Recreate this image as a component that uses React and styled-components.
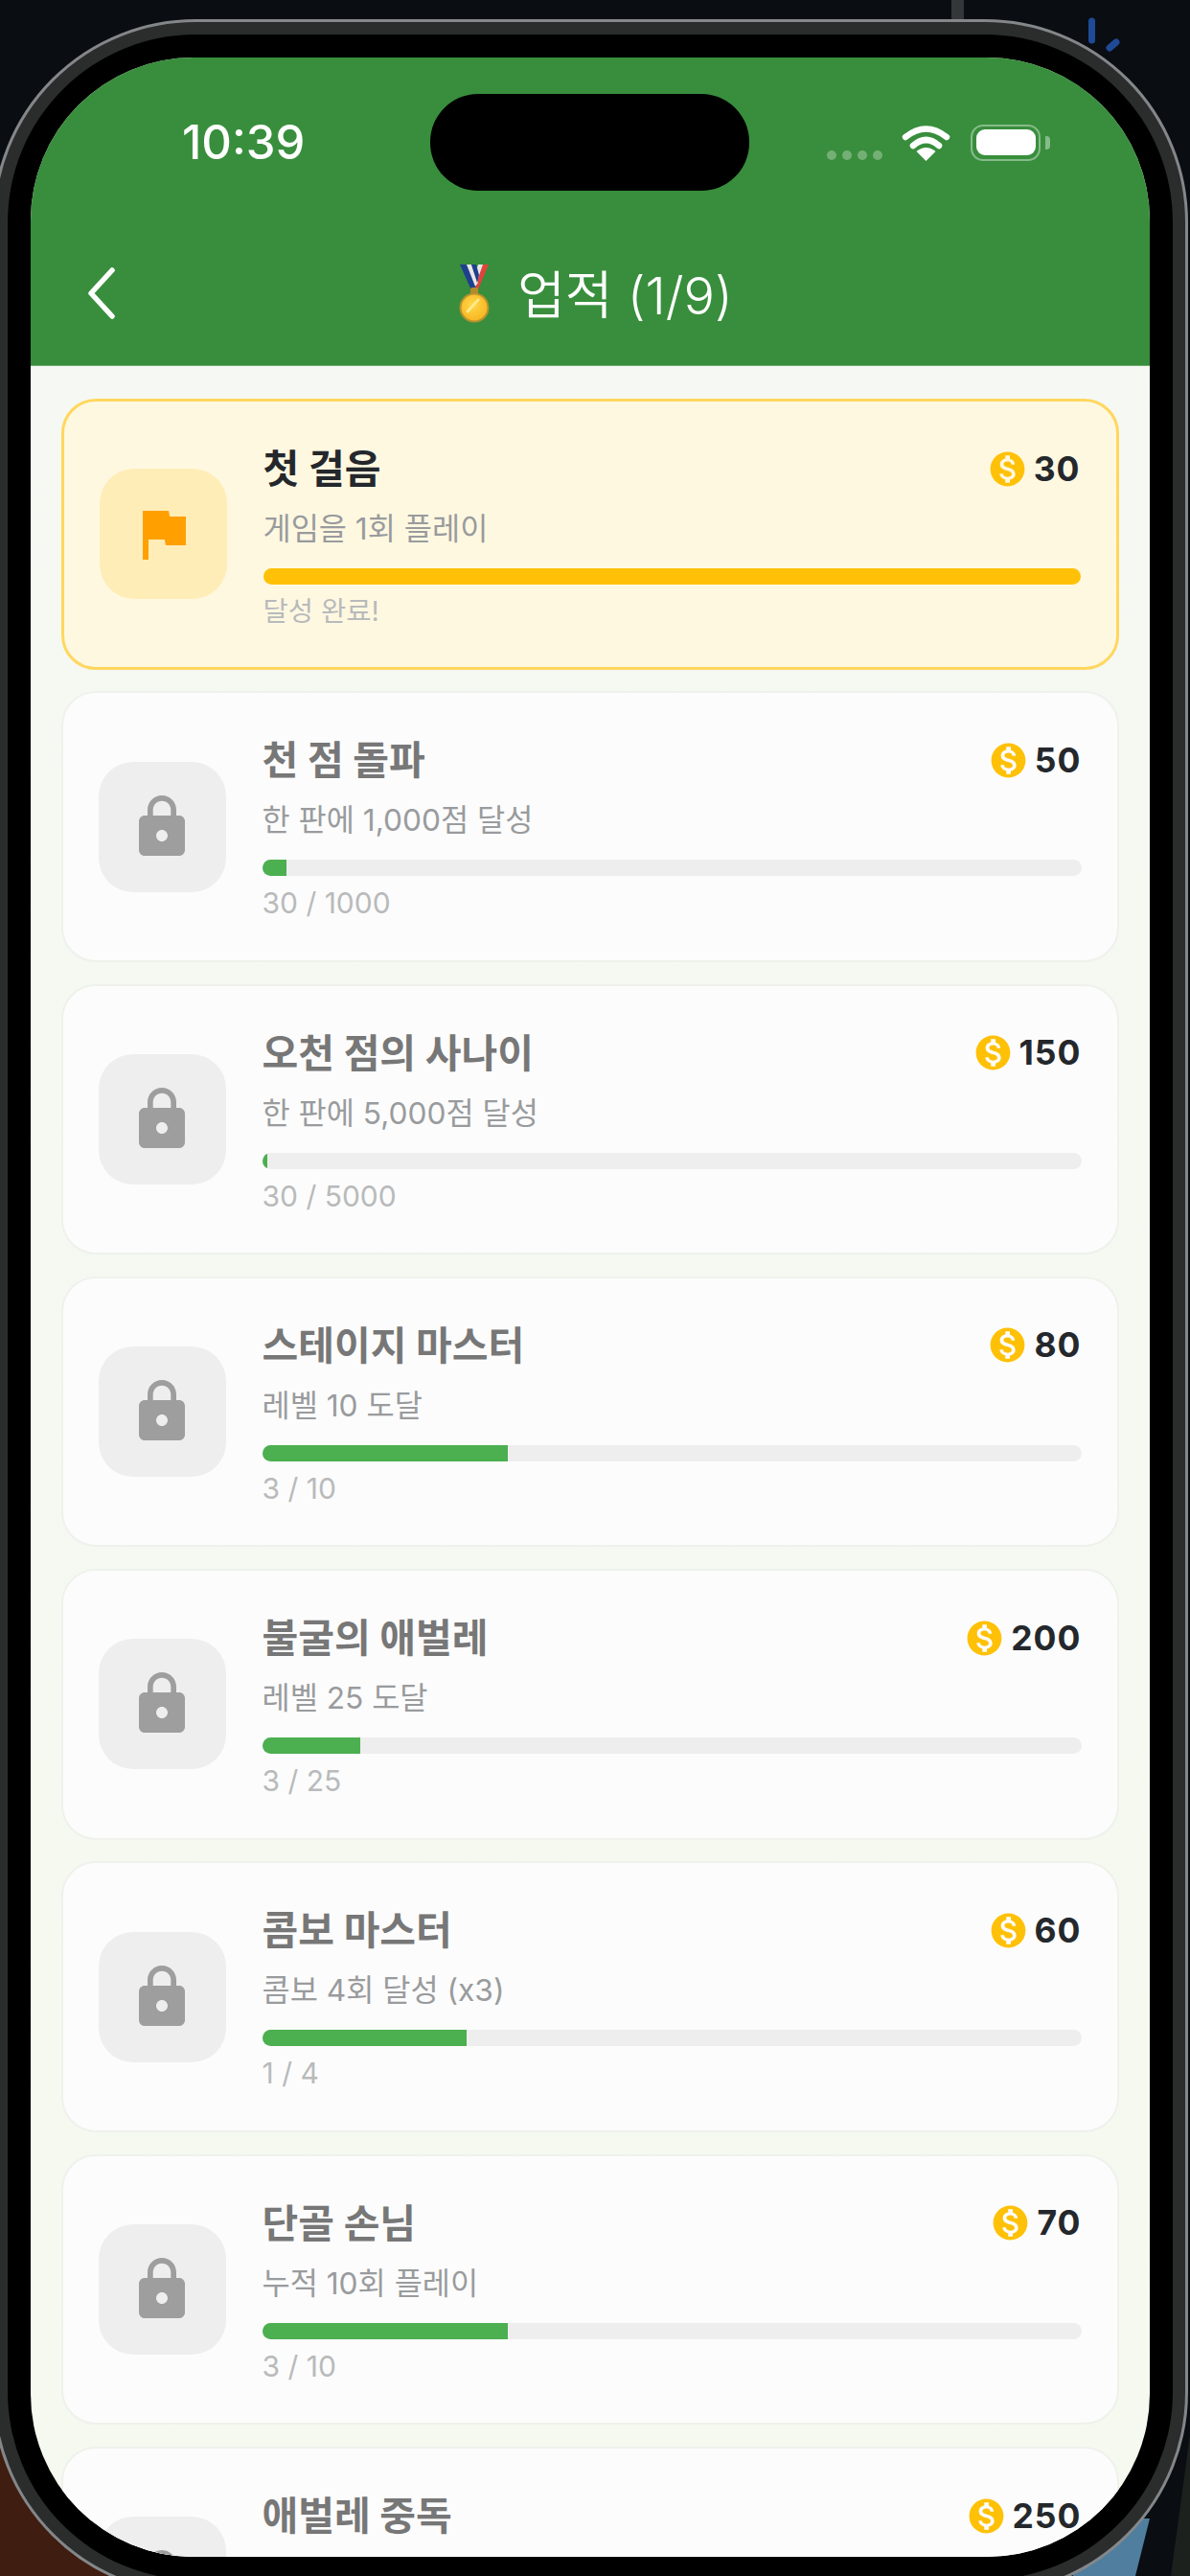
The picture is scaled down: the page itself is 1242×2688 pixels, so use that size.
import React from 'react';
import styled, { createGlobalStyle } from 'styled-components';
import { MdFlag, MdLock, MdMonetizationOn } from 'react-icons/md';

const GlobalStyle = createGlobalStyle`
  html, body {
    margin: 0;
    width: 1242px;
    height: 2688px;
    overflow: hidden;
    background: #0a0d12;
  }
  * { box-sizing: border-box; }
  body {
    font-family: "Inter", "Noto Sans CJK KR", sans-serif;
  }
`;

const achievements = [
  { title: '첫 걸음', desc: '게임을 1회 플레이', reward: 30, done: true, label: '달성 완료!' },
  { title: '천 점 돌파', desc: '한 판에 1,000점 달성', reward: 50, current: 30, goal: 1000 },
  { title: '오천 점의 사나이', desc: '한 판에 5,000점 달성', reward: 150, current: 30, goal: 5000 },
  { title: '스테이지 마스터', desc: '레벨 10 도달', reward: 80, current: 3, goal: 10 },
  { title: '불굴의 애벌레', desc: '레벨 25 도달', reward: 200, current: 3, goal: 25 },
  { title: '콤보 마스터', desc: '콤보 4회 달성 (x3)', reward: 60, current: 1, goal: 4 },
  { title: '단골 손님', desc: '누적 10회 플레이', reward: 70, current: 3, goal: 10 },
  { title: '애벌레 중독', reward: 250 },
];

// the desk behind the device: a stripe at the top, wallpaper showing at the bottom left
const Backdrop = styled.div`
  position: relative;
  width: 1242px;
  height: 2688px;
  overflow: hidden;
  padding-top: 20px;
  background:
    linear-gradient(#34373a, #34373a) 993px 0 / 13px 20px no-repeat,
    linear-gradient(#3f1d10, #3f1d10) 0 2540px / 130px 148px no-repeat,
    #0a0d12;
`;

const Scenery = styled.svg`
  position: absolute;
  left: 0;
  top: 0;
  width: 1242px;
  height: 2688px;
`;

const Frame = styled.div`
  position: relative;
  width: 1248px;
  height: 2688px;
  margin-left: -8px;
  padding: 13px;
  border: 3px solid #84878a;
  border-radius: 212px;
  background: #2b2d2d;
`;

const Bezel = styled.div`
  height: 100%;
  padding: 24px;
  border-radius: 196px;
  background: #000;
`;

const Screen = styled.div`
  height: 100%;
  overflow: hidden;
  border-radius: 170px;
  background: linear-gradient(#f6f8f3, #f5f9ef);
`;

const Header = styled.header`
  height: 322px;
  padding-top: 38px;
  background: #388e3c;
  border-bottom: 1px solid #6fae72;
`;

const StatusRow = styled.div`
  display: grid;
  grid-template-columns: 417px 333px 1fr;
  align-items: center;
  height: 101px;
`;

const Time = styled.div`
  padding-left: 158px;
  color: #fff;
  font-size: 49px;
  font-weight: 500;
`;

const Island = styled.div`
  height: 101px;
  border-radius: 50px;
  background: #000;
`;

const StatusIcons = styled.div`
  display: flex;
  align-items: center;
  padding-left: 81px;
`;

const SignalDots = styled.div`
  display: flex;
  gap: 6px;
  margin: 27px 20px 0 0;
`;

const SignalDot = styled.span`
  width: 10px;
  height: 10px;
  border-radius: 50%;
  background: rgba(255, 255, 255, 0.3);
`;

const Battery = styled.div`
  position: relative;
  width: 73px;
  height: 38px;
  margin-left: 21px;
  padding: 3.5px;
  border: 2px solid rgba(255, 255, 255, 0.4);
  border-radius: 13px;
  &::after {
    content: '';
    position: absolute;
    right: -12px;
    top: 10px;
    width: 5px;
    height: 14px;
    border-radius: 0 4px 4px 0;
    background: rgba(255, 255, 255, 0.4);
  }
`;

const BatteryLevel = styled.div`
  height: 100%;
  border-radius: 9px;
  background: #fff;
`;

const NavRow = styled.div`
  display: grid;
  grid-template-columns: 1fr auto 1fr;
  align-items: center;
  height: 107px;
  margin-top: 53px;
  padding-left: 12px;
`;

const BackIcon = styled.svg`
  width: 30px;
  height: 54px;
  margin-left: 47px;
`;

const Title = styled.div`
  display: flex;
  align-items: center;
  gap: 29px;
  color: #fff;
  font-size: 54px;
  font-weight: 350;
  line-height: 1;
`;

const TitleText = styled.span`
  padding-top: 6px;
`;

const Medal = styled.svg`
  width: 32px;
  height: 62px;
`;

const List = styled.div`
  display: flex;
  flex-direction: column;
  gap: 22.8px;
  padding: 34px 32px 0;
`;

const Card = styled.div`
  display: flex;
  align-items: center;
  gap: 38px;
  height: 282.5px;
  padding: 0 37.5px 0 36.5px;
  border: ${(p) => (p.$done ? '3px solid #ffd75e' : '2.5px solid #eff1ec')};
  border-radius: 36px;
  background: ${(p) => (p.$done ? '#fff8e1' : '#fcfcfc')};
`;

const IconBox = styled.div`
  flex: none;
  display: flex;
  align-items: center;
  justify-content: center;
  width: 133px;
  height: 136px;
  border-radius: 36px;
  background: ${(p) => (p.$done ? '#ffedb8' : '#eeeeee')};
  color: ${(p) => (p.$done ? '#ffa000' : '#9e9e9e')};
  font-size: 72px;
`;

const Body = styled.div`
  flex: 1;
  align-self: flex-start;
  min-width: 0;
  padding-top: 41px;
`;

const TopRow = styled.div`
  display: flex;
  align-items: center;
  justify-content: space-between;
  height: 52px;
`;

const Name = styled.div`
  color: ${(p) => (p.$done ? '#24282c' : '#777777')};
  font-size: 41px;
  font-weight: 700;
`;

const Reward = styled.div`
  display: flex;
  align-items: center;
  gap: 6px;
  padding-top: 6px;
  color: #24282c;
  font-size: 35.5px;
  font-weight: 700;
  letter-spacing: 1px;
  svg {
    color: #ffc107;
    font-size: 43px;
  }
`;

const Desc = styled.div`
  margin-top: 20px;
  color: #999b9d;
  font-size: 31.7px;
  line-height: 40px;
`;

const Track = styled.div`
  height: 17px;
  margin-top: 21px;
  overflow: hidden;
  border-radius: 9px;
  background: #eeeeee;
`;

const Fill = styled.div`
  height: 100%;
  background: ${(p) => (p.$done ? '#ffc107' : '#4caf50')};
`;

const Progress = styled.div`
  margin-top: 10px;
  color: #b8babb;
  font-size: ${(p) => (p.$done ? '28.5px' : '30px')};
  line-height: 36px;
`;

function WifiIcon() {
  return (
    <svg width="51" height="40" viewBox="0 0 51 40">
      <g fill="none" stroke="#fff" strokeWidth="6.5" strokeLinecap="round">
        <path d="M4 14 Q25.5 -3 47 14" />
        <path d="M12 23 Q25.5 11 39 23" />
      </g>
      <path d="M25.5 39 L15.5 29 Q25.5 21 35.5 29 Z" fill="#fff" />
    </svg>
  );
}

function MedalIcon() {
  return (
    <Medal viewBox="0 0 32 62">
      <defs>
        <radialGradient id="gold" cx="45%" cy="40%" r="60%">
          <stop offset="0%" stopColor="#ffd84a" />
          <stop offset="100%" stopColor="#f7b51f" />
        </radialGradient>
      </defs>
      <polygon points="24,1 31,1 20,27 14,22" fill="#e0443a" />
      <polygon points="20,1 25,1 17,24 14,20" fill="#e9e7e2" />
      <polygon points="1,1 8,1 18,24 13,28" fill="#1f3f8f" />
      <polygon points="8,1 13,1 20,20 17,24" fill="#e9e7e2" />
      <polygon points="13,1 18,1 21,12 19,20" fill="#1f3f8f" />
      <rect x="12" y="25" width="8" height="7" rx="2" fill="#b58a2a" />
      <circle cx="16" cy="46" r="14.5" fill="url(#gold)" stroke="#b8912e" strokeWidth="2" />
      <path d="M9 50 L20 38" stroke="#ffe98a" strokeWidth="3" strokeLinecap="round" />
    </Medal>
  );
}

function AchievementCard({ item }) {
  const hasBar = item.done || item.goal;
  const percent = item.done ? 100 : (item.current / item.goal) * 100;
  return (
    <Card $done={item.done}>
      <IconBox $done={item.done}>{item.done ? <MdFlag /> : <MdLock />}</IconBox>
      <Body>
        <TopRow>
          <Name $done={item.done}>{item.title}</Name>
          <Reward>
            <MdMonetizationOn />
            {item.reward}
          </Reward>
        </TopRow>
        {item.desc && <Desc>{item.desc}</Desc>}
        {hasBar && (
          <Track>
            <Fill $done={item.done} style={{ width: `${percent}%` }} />
          </Track>
        )}
        {hasBar && (
          <Progress $done={item.done}>
            {item.done ? item.label : `${item.current} / ${item.goal}`}
          </Progress>
        )}
      </Body>
    </Card>
  );
}

export default function App() {
  return (
    <>
      <GlobalStyle />
      <Backdrop>
        <Scenery viewBox="0 0 1242 2688">
          <path d="M1139.5 22 V42" stroke="#1f4a96" strokeWidth="7" strokeLinecap="round" />
          <path d="M1158 50 L1165 44" stroke="#1f4a96" strokeWidth="7" strokeLinecap="round" />
          <polygon points="1200,2628 1185,2688 1120,2688 1120,2628" fill="#4f7e9e" />
          <polygon points="1242,2540 1242,2688 1222,2688" fill="#1c211e" />
        </Scenery>
        <Frame>
          <Bezel>
            <Screen>
              <Header>
                <StatusRow>
                  <Time>10:39</Time>
                  <Island />
                  <StatusIcons>
                    <SignalDots>
                      <SignalDot />
                      <SignalDot />
                      <SignalDot />
                      <SignalDot />
                    </SignalDots>
                    <WifiIcon />
                    <Battery>
                      <BatteryLevel />
                    </Battery>
                  </StatusIcons>
                </StatusRow>
                <NavRow>
                  <BackIcon viewBox="0 0 30 54">
                    <path d="M26 3 L4 27 L26 51" fill="none" stroke="#fff" strokeWidth="5.5" strokeLinecap="round" strokeLinejoin="round" />
                  </BackIcon>
                  <Title>
                    <MedalIcon />
                    <TitleText>업적 (1/9)</TitleText>
                  </Title>
                </NavRow>
              </Header>
              <List>
                {achievements.map((item) => (
                  <AchievementCard key={item.title} item={item} />
                ))}
              </List>
            </Screen>
          </Bezel>
        </Frame>
      </Backdrop>
    </>
  );
}
